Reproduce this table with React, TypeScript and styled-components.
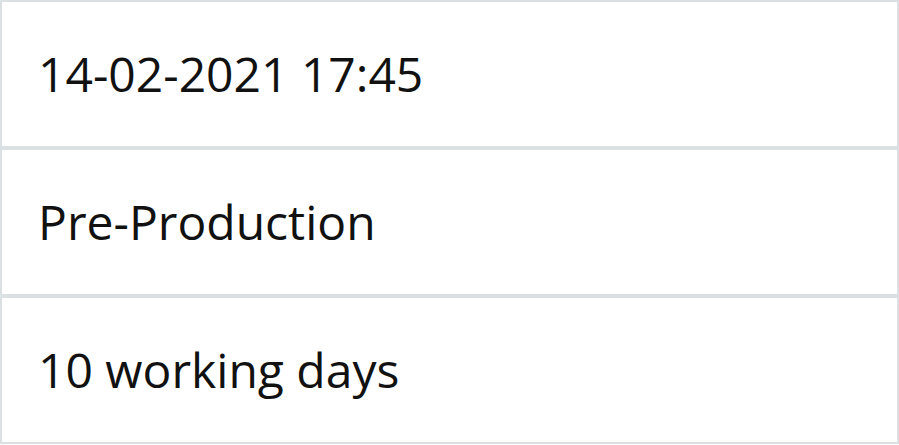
import React from "react";
import styled, { createGlobalStyle } from "styled-components";

const GlobalStyle = createGlobalStyle`
    html, body {
        margin: 0;
        padding: 0;
        background: #ffffff;
    }
    body {
        font-family: "Open Sans", "Noto Sans", sans-serif;
    }
`;

const rows = ["14-02-2021 17:45", "Pre-Production", "10 working days"];

const App = () => {
    return (
        <>
            <GlobalStyle />
            <List>
                {rows.map((text) => (
                    <Row key={text}>
                        <Value>{text}</Value>
                    </Row>
                ))}
            </List>
        </>
    );
};

const List = styled.div`
    display: flex;
    flex-direction: column;
    width: 899px;
`;
const Row = styled.div`
    box-sizing: border-box;
    height: 148px;
    border: 2px solid #dbe0e3;
    display: flex;
    align-items: center;
    padding: 0 36px;
`;
const Value = styled.div`
    font-size: 48px;
    color: #111111;
    line-height: 1;
`;

export default App;
